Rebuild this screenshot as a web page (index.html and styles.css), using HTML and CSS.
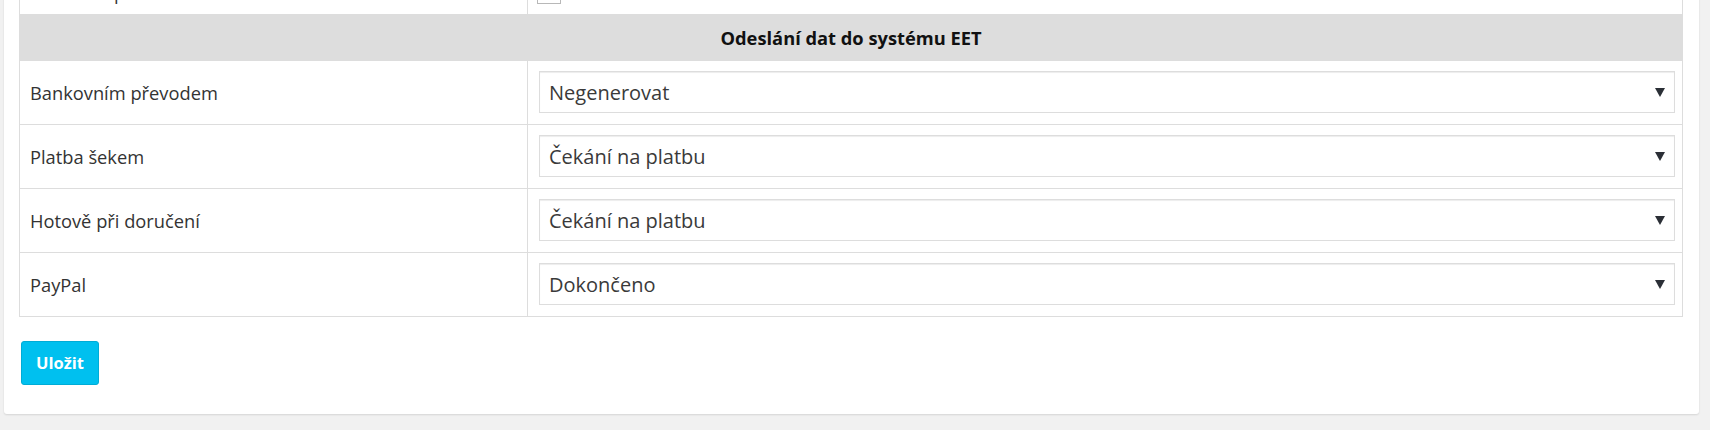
FILE: index.html
```html
<!DOCTYPE html>
<html lang="cs">
<head>
<meta charset="utf-8">
<title>Nastavení EET</title>
<link rel="stylesheet" href="styles.css">
</head>
<body>
<div class="page">
  <div class="card">
    <div class="settings">
      <div class="row">
        <div class="label">Testovací prostředí</div>
        <div class="value value-check"><input type="checkbox" class="check"></div>
      </div>
      <div class="row row-head">Odeslání dat do systému EET</div>
      <div class="row">
        <div class="label">Bankovním převodem</div>
        <div class="value"><div class="select-wrap"><select class="select"><option>Negenerovat</option></select></div></div>
      </div>
      <div class="row">
        <div class="label">Platba šekem</div>
        <div class="value"><div class="select-wrap"><select class="select"><option>Čekání na platbu</option></select></div></div>
      </div>
      <div class="row">
        <div class="label">Hotově při doručení</div>
        <div class="value"><div class="select-wrap"><select class="select"><option>Čekání na platbu</option></select></div></div>
      </div>
      <div class="row">
        <div class="label">PayPal</div>
        <div class="value"><div class="select-wrap"><select class="select"><option>Dokončeno</option></select></div></div>
      </div>
    </div>
    <button class="btn" type="button">Uložit</button>
  </div>
</div>
</body>
</html>
```
FILE: styles.css
```css
html, body {
  margin: 0;
  background: #f1f1f1;
}
body {
  font-family: "Open Sans", "Noto Sans", sans-serif;
  color: #333;
  overflow: hidden;
}
.page {
  padding: 0 11px 16px 4px;
}
.card {
  background: #fff;
  border-radius: 3px;
  box-shadow: 0 1px 2px rgba(0, 0, 0, 0.12);
  margin-top: -31px;
  padding: 0 16px 29px 15px;
}
.settings {
  border: 1px solid #ddd;
}
.row {
  display: grid;
  grid-template-columns: 507px 1fr;
  border-top: 1px solid #ddd;
}
.row:first-child {
  border-top: 0;
}
.label {
  display: flex;
  align-items: center;
  padding: 0 10px;
  font-size: 18.3px;
  color: #333;
}
.value {
  border-left: 1px solid #ddd;
  padding: 10px 7px 11px 11px;
}
.value-check {
  padding: 10px 11px;
}
.check {
  appearance: none;
  -webkit-appearance: none;
  display: block;
  width: 24px;
  height: 24px;
  margin: 0 0 0 -2px;
  border: 1px solid #b8b8b8;
  background: #fff;
  box-sizing: border-box;
}
.row-head {
  display: block;
  background: #ddd;
  height: 45px;
  line-height: 45px;
  text-align: center;
  font-weight: 700;
  font-size: 18.3px;
  color: #111;
}
.select-wrap {
  position: relative;
}
.select-wrap::after {
  content: "";
  position: absolute;
  right: 10px;
  top: 50%;
  margin-top: -4px;
  border-left: 5px solid transparent;
  border-right: 5px solid transparent;
  border-top: 9px solid #2b2f36;
  pointer-events: none;
}
.select {
  appearance: none;
  -webkit-appearance: none;
  display: block;
  width: 100%;
  height: 42px;
  box-sizing: border-box;
  margin: 0;
  padding: 0 30px 0 9px;
  border: 1px solid #ddd;
  border-radius: 0;
  background: #fff;
  box-shadow: inset 0 1px 1px rgba(0, 0, 0, 0.075);
  font-family: "Open Sans", "Noto Sans", sans-serif;
  font-size: 20px;
  color: #3a3a3a;
}
.btn {
  display: block;
  margin: 24px 0 0 2px;
  padding: 9px 14px;
  border: 1px solid #00acd6;
  border-radius: 3px;
  background: #00c0ef;
  color: #fff;
  font-family: "Open Sans", "Noto Sans", sans-serif;
  font-size: 16.5px;
  font-weight: 700;
  line-height: 24px;
}
```
